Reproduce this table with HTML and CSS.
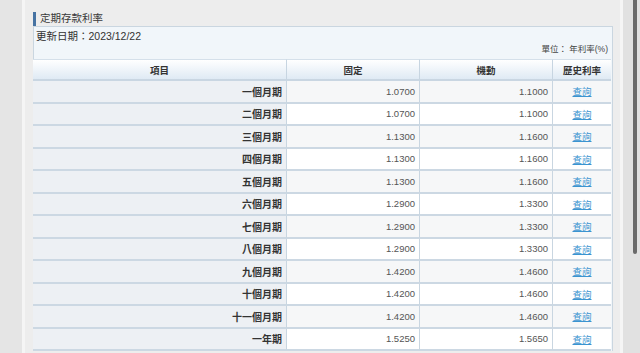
FILE: index.html
```html
<!DOCTYPE html>
<html lang="zh-Hant">
<head>
<meta charset="utf-8">
<title>定期存款利率</title>
<link rel="stylesheet" href="styles.css">
</head>
<body>
<div class="page">
  <div class="side-left"></div>
  <div class="edge"></div>
  <main class="main">
    <h2 class="title">定期存款利率</h2>
    <section class="box">
      <div class="date">更新日期：2023/12/22</div>
      <div class="unit">單位： 年利率(%)</div>
      <table class="rates">
        <colgroup>
          <col class="c-item"><col class="c-fix"><col class="c-var"><col class="c-his">
        </colgroup>
        <thead>
          <tr><th>項目</th><th>固定</th><th>機動</th><th>歷史利率</th></tr>
        </thead>
        <tbody>
          <tr class="odd"><th>一個月期</th><td>1.0700</td><td>1.1000</td><td class="lk"><a href="#">查詢</a></td></tr>
          <tr><th>二個月期</th><td>1.0700</td><td>1.1000</td><td class="lk"><a href="#">查詢</a></td></tr>
          <tr class="odd"><th>三個月期</th><td>1.1300</td><td>1.1600</td><td class="lk"><a href="#">查詢</a></td></tr>
          <tr><th>四個月期</th><td>1.1300</td><td>1.1600</td><td class="lk"><a href="#">查詢</a></td></tr>
          <tr class="odd"><th>五個月期</th><td>1.1300</td><td>1.1600</td><td class="lk"><a href="#">查詢</a></td></tr>
          <tr><th>六個月期</th><td>1.2900</td><td>1.3300</td><td class="lk"><a href="#">查詢</a></td></tr>
          <tr class="odd"><th>七個月期</th><td>1.2900</td><td>1.3300</td><td class="lk"><a href="#">查詢</a></td></tr>
          <tr><th>八個月期</th><td>1.2900</td><td>1.3300</td><td class="lk"><a href="#">查詢</a></td></tr>
          <tr class="odd"><th>九個月期</th><td>1.4200</td><td>1.4600</td><td class="lk"><a href="#">查詢</a></td></tr>
          <tr><th>十個月期</th><td>1.4200</td><td>1.4600</td><td class="lk"><a href="#">查詢</a></td></tr>
          <tr class="odd"><th>十一個月期</th><td>1.4200</td><td>1.4600</td><td class="lk"><a href="#">查詢</a></td></tr>
          <tr><th>一年期</th><td>1.5250</td><td>1.5650</td><td class="lk"><a href="#">查詢</a></td></tr>
        </tbody>
      </table>
    </section>
  </main>
  <div class="edge"></div>
  <div class="gutter"><div class="thumb"></div></div>
</div>
</body>
</html>
```
FILE: styles.css
```css
* { box-sizing: border-box; }
html, body {
  margin: 0;
  padding: 0;
  height: 100%;
  overflow: hidden;
}
body {
  background: #ededed;
  font-family: "Liberation Sans", "Noto Sans CJK TC", sans-serif;
  color: #333;
}
.page {
  display: flex;
  height: 353px;
  overflow: hidden;
}
.side-left {
  width: 22px;
  flex: none;
  background: #e5e5e5;
}
.edge {
  width: 3px;
  flex: none;
  background: #f5f5f5;
}
.main {
  flex: 1;
  min-width: 0;
  padding: 12px 7px 0 8px;
  background: #ededed;
}
.gutter {
  width: 17px;
  flex: none;
  background: #e1e1e1;
  padding-left: 10px;
}
.thumb {
  width: 4px;
  height: 254px;
  background: #6a6a6a;
  border-radius: 0 0 2px 2px;
}
.title {
  margin: 0;
  height: 14px;
  line-height: 13px;
  font-size: 10.5px;
  font-weight: normal;
  color: #3a3a3a;
  border-left: 3px solid #4673a3;
  padding-left: 4px;
}
.box {
  border: 1px solid #cad6e0;
  border-bottom: none;
  background: #f1f6fa;
}
.date {
  margin-top: 2px;
  padding-left: 2px;
  font-size: 10.5px;
  line-height: 14px;
  color: #333;
}
.unit {
  text-align: right;
  font-size: 8.5px;
  line-height: 12px;
  padding-right: 4px;
  color: #444;
  margin-bottom: 4px;
}
.rates {
  margin-left: -1px;
  width: 578px;
  border-collapse: separate;
  border-spacing: 0;
  table-layout: fixed;
  font-size: 9.5px;
}
.c-item { width: 254px; }
.c-fix { width: 133px; }
.c-var { width: 133px; }
.c-his { width: 58px; }
.rates thead th {
  height: 22px;
  padding: 0;
  text-align: center;
  font-size: 9.5px;
  font-weight: bold;
  color: #333;
  background: linear-gradient(#ffffff, #dfeaf4);
  border-bottom: 2px solid #c9d6e2;
  border-right: 1px solid #c7d5e1;
  border-top: 1px solid #d5e0ea;
}
.rates thead th:last-child { border-right: none; }
.rates tbody th,
.rates tbody td {
  height: 22.5px;
  padding: 0 4px;
  border-bottom: 2px solid #ccd8e3;
  border-right: 1px solid #c9d6e1;
  vertical-align: middle;
}
.rates tbody th {
  text-align: right;
  font-size: 10px;
  font-weight: bold;
  color: #333;
  background: #edf0f4;
}
.rates tbody td {
  text-align: right;
  color: #555;
  background: #ffffff;
}
.rates tbody tr.odd td { background: #f6f7f8; }
.rates tbody td.lk {
  text-align: center;
  border-right: none;
}
.rates a {
  color: #3b94d0;
  text-decoration: underline;
}
```
